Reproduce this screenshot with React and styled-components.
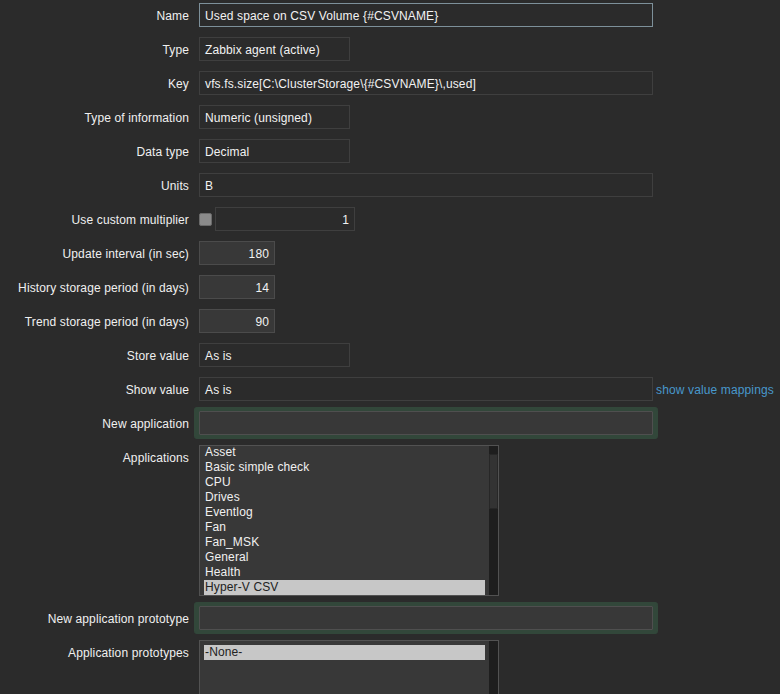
import React from 'react';
import styled, { createGlobalStyle, css } from 'styled-components';

const GlobalStyle = createGlobalStyle`
  html, body {
    margin: 0;
    padding: 0;
    background: #2b2b2b;
    overflow: hidden;
  }
  body {
    font-family: "Liberation Sans", Arial, sans-serif;
    font-size: 12px;
    letter-spacing: 0.13px;
    color: #f2f2f2;
  }
`;

const Form = styled.div`
  display: grid;
  grid-template-columns: 189px 1fr;
  column-gap: 10px;
  row-gap: 10px;
  padding-top: 3px;
  width: 780px;
`;

const Label = styled.div`
  text-align: right;
  line-height: 26px;
  height: 24px;
  white-space: nowrap;
  color: #f0f0f0;
`;

const Field = styled.div`
  display: flex;
  align-items: center;
  gap: ${p => p.$gap || 0}px;
  min-height: 24px;
`;

const Box = styled.div`
  box-sizing: border-box;
  height: 24px;
  width: ${p => p.$w}px;
  padding: 0 5px;
  line-height: 24px;
  border: 1px solid #3f3f3f;
  background: #2b2b2b;
  color: #f2f2f2;
  white-space: nowrap;
  overflow: hidden;
  text-align: ${p => (p.$right ? 'right' : 'left')};
  ${p => p.$num && css`
    background: #383838;
    border-color: #4b4b4b;
  `}
  ${p => p.$focus && css`
    border-color: #7d909a;
  `}
  ${p => p.$glow && css`
    background: #383838;
    border-color: #4f4f4f;
    border-radius: 1px;
    box-shadow: 0 0 0 4px #32473a, 1px 0 0 4px #32473a, -1px 0 0 4px #32473a;
  `}
`;

const Check = styled.span`
  box-sizing: border-box;
  width: 13px;
  height: 13px;
  margin-top: 1px;
  background: #8b8b8b;
  border: 1px solid #6a6a6a;
  border-radius: 2px;
`;

const MapLink = styled.a`
  color: #4898cc;
  text-decoration: none;
  margin-left: 3px;
  padding-top: 1px;
  white-space: nowrap;
  cursor: pointer;
`;

const ListBox = styled.div`
  box-sizing: border-box;
  width: 300px;
  height: 151px;
  border: 1px solid #525252;
  background: #383838;
  display: flex;
  overflow: hidden;
`;

const Items = styled.div`
  flex: 1;
  padding: 0 4px;
  margin-top: ${p => p.$offset}px;
`;

const Item = styled.div`
  height: 15px;
  line-height: 15px;
  padding-left: 1px;
  white-space: nowrap;
  color: ${p => (p.$selected ? '#222222' : '#f0f0f0')};
  background: ${p => (p.$selected ? '#c7c7c7' : 'transparent')};
`;

const Scroll = styled.div`
  width: 9px;
  background: #1e1e1e;
  display: flex;
  flex-direction: column;
  padding-top: ${p => (p.$thumb ? 8 : 0)}px;
`;

const Thumb = styled.div`
  box-sizing: border-box;
  height: 55px;
  background: #333333;
  border: 1px solid #272727;
`;

const apps = [
  'Asset', 'Basic simple check', 'CPU', 'Drives', 'Eventlog', 'Fan',
  'Fan_MSK', 'General', 'Health', 'Hyper-V CSV'
];

function List({ items, selected, offset, thumb }) {
  return (
    <ListBox>
      <Items $offset={offset}>
        {items.map(i => (
          <Item key={i} $selected={i === selected}>{i}</Item>
        ))}
      </Items>
      <Scroll $thumb={thumb}>{thumb && <Thumb />}</Scroll>
    </ListBox>
  );
}

export default function App() {
  return (
    <>
      <GlobalStyle />
      <Form>
        <Label>Name</Label>
        <Field><Box $w={454} $focus>Used space on CSV Volume {'{#CSVNAME}'}</Box></Field>

        <Label>Type</Label>
        <Field><Box $w={151}>Zabbix agent (active)</Box></Field>

        <Label>Key</Label>
        <Field><Box $w={454}>vfs.fs.size[C:\ClusterStorage\{'{#CSVNAME}'}\,used]</Box></Field>

        <Label>Type of information</Label>
        <Field><Box $w={151}>Numeric (unsigned)</Box></Field>

        <Label>Data type</Label>
        <Field><Box $w={151}>Decimal</Box></Field>

        <Label>Units</Label>
        <Field><Box $w={454}>B</Box></Field>

        <Label>Use custom multiplier</Label>
        <Field $gap={3}>
          <Check />
          <Box $w={140} $right>1</Box>
        </Field>

        <Label>Update interval (in sec)</Label>
        <Field><Box $w={76} $num $right>180</Box></Field>

        <Label>History storage period (in days)</Label>
        <Field><Box $w={76} $num $right>14</Box></Field>

        <Label>Trend storage period (in days)</Label>
        <Field><Box $w={76} $num $right>90</Box></Field>

        <Label>Store value</Label>
        <Field><Box $w={151}>As is</Box></Field>

        <Label>Show value</Label>
        <Field>
          <Box $w={454}>As is</Box>
          <MapLink>show value mappings</MapLink>
        </Field>

        <Label>New application</Label>
        <Field><Box $w={454} $glow /></Field>

        <Label>Applications</Label>
        <Field>
          <List items={apps} selected="Hyper-V CSV" offset={-1} thumb />
        </Field>

        <Label>New application prototype</Label>
        <Field><Box $w={454} $glow /></Field>

        <Label>Application prototypes</Label>
        <Field>
          <List items={['-None-']} selected="-None-" offset={4} />
        </Field>
      </Form>
    </>
  );
}
